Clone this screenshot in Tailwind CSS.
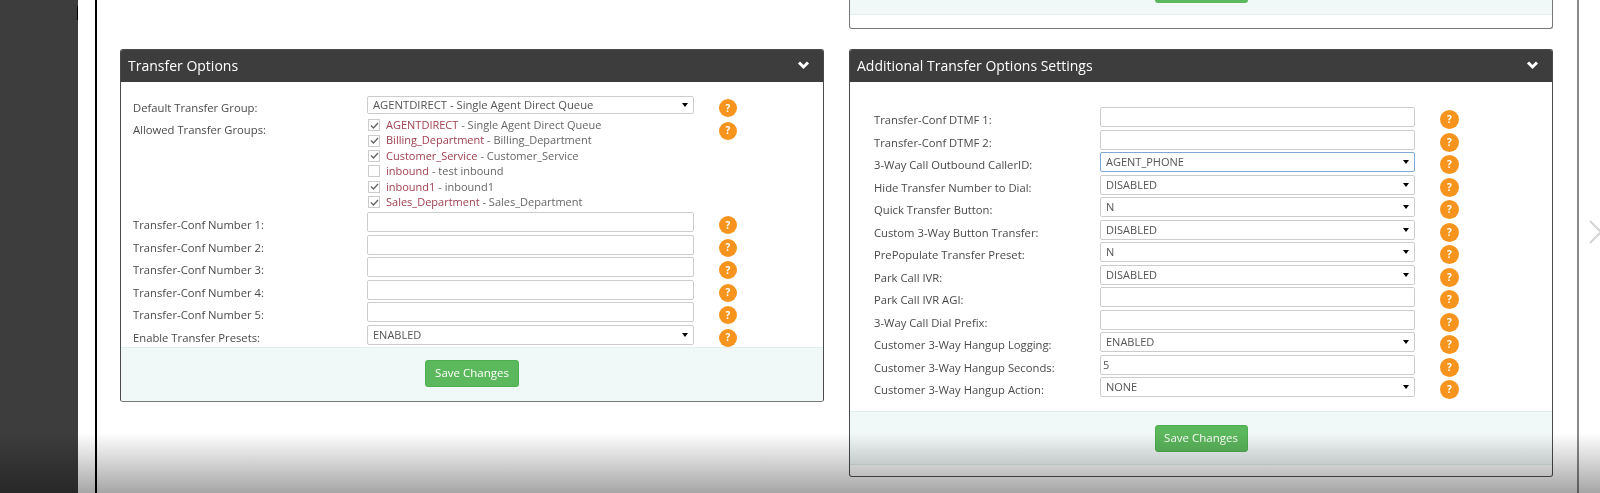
<!DOCTYPE html>
<html lang="en">
<head>
<meta charset="utf-8">
<title>Transfer Options</title>
<script src="https://cdn.jsdelivr.net/npm/@tailwindcss/browser@4"></script>
</head>
<body class="bg-white overflow-hidden">
<div class="relative flex h-[493px] w-[1600px] overflow-hidden bg-white font-['Open_Sans',sans-serif] text-[11.25px] text-[#4a4a4a]">
  <aside class="relative w-[78px] shrink-0 bg-[#3d3d3d]"><span class="absolute right-0 top-[6px] h-[14px] w-[1px] bg-black"></span></aside>
  <div class="w-[17px] shrink-0"></div>
  <main class="flex w-[1484px] shrink-0 gap-[25px] border-x-2 border-l-black border-r-[#8a8a8a] pl-[23px] pr-[24px] blur-[0.35px]">
    <!-- Left column -->
    <div class="w-[704px] shrink-0 pt-[49px]">
      <section class="overflow-hidden rounded-[3px] border border-[#4a4a4a] border-b-[#777]">
        <header class="flex h-[32px] items-center justify-between bg-[#3d3d3d] pb-[2px] pl-[7px] pr-[13px] text-[14px] text-white">
          <h2>Transfer Options</h2>
          <svg class="h-[10px] w-[13px]" viewBox="0 0 13 10" fill="none" stroke="white" stroke-width="3"><path d="M2 2.5l4.5 4.5 4.5-4.5"/></svg>
        </header>
        <div class="pl-[12px] pt-[14px]">
          <div class="flex h-[21.5px] items-start">
            <label class="mt-[3.5px] w-[234px] shrink-0 leading-4">Default Transfer Group:</label>
            <div class="relative h-[18px] w-[327px] shrink-0 rounded-[2px] border border-[#ccc] pl-[5px] leading-4 text-[#555]">AGENTDIRECT - Single Agent Direct Queue<span class="absolute right-[5px] top-[6px] h-0 w-0 border-x-[3px] border-t-[4px] border-x-transparent border-t-black"></span></div>
            <span class="ml-[25px] mt-[3px] flex size-[18px] items-center justify-center rounded-full bg-[#f7941d] text-[10px] font-bold text-white">?</span>
          </div>
          <div class="flex h-[94.5px] items-start">
            <label class="mt-[4.5px] w-[234px] shrink-0 leading-4">Allowed Transfer Groups:</label>
            <ul class="w-[327px] shrink-0 pl-[1px] text-[11px] text-[#666]">
              <li class="flex h-[15.4px] items-center gap-[6px]"><span class="flex size-[12px] items-center justify-center border border-[#ccc]"><svg class="size-[9px]" viewBox="0 0 9 9" fill="none" stroke="#666" stroke-width="1.4"><path d="M1 4.5l2.5 2.5 4.5-5"/></svg></span><span><span class="text-[#a0404f]">AGENTDIRECT</span> - Single Agent Direct Queue</span></li>
              <li class="flex h-[15.4px] items-center gap-[6px]"><span class="flex size-[12px] items-center justify-center border border-[#ccc]"><svg class="size-[9px]" viewBox="0 0 9 9" fill="none" stroke="#666" stroke-width="1.4"><path d="M1 4.5l2.5 2.5 4.5-5"/></svg></span><span><span class="text-[#a0404f]">Billing_Department</span> - Billing_Department</span></li>
              <li class="flex h-[15.4px] items-center gap-[6px]"><span class="flex size-[12px] items-center justify-center border border-[#ccc]"><svg class="size-[9px]" viewBox="0 0 9 9" fill="none" stroke="#666" stroke-width="1.4"><path d="M1 4.5l2.5 2.5 4.5-5"/></svg></span><span><span class="text-[#a0404f]">Customer_Service</span> - Customer_Service</span></li>
              <li class="flex h-[15.4px] items-center gap-[6px]"><span class="flex size-[12px] items-center justify-center border border-[#ccc]"></span><span><span class="text-[#a0404f]">inbound</span> - test inbound</span></li>
              <li class="flex h-[15.4px] items-center gap-[6px]"><span class="flex size-[12px] items-center justify-center border border-[#ccc]"><svg class="size-[9px]" viewBox="0 0 9 9" fill="none" stroke="#666" stroke-width="1.4"><path d="M1 4.5l2.5 2.5 4.5-5"/></svg></span><span><span class="text-[#a0404f]">inbound1</span> - inbound1</span></li>
              <li class="flex h-[15.4px] items-center gap-[6px]"><span class="flex size-[12px] items-center justify-center border border-[#ccc]"><svg class="size-[9px]" viewBox="0 0 9 9" fill="none" stroke="#666" stroke-width="1.4"><path d="M1 4.5l2.5 2.5 4.5-5"/></svg></span><span><span class="text-[#a0404f]">Sales_Department</span> - Sales_Department</span></li>
            </ul>
            <span class="ml-[25px] mt-[4px] flex size-[18px] items-center justify-center rounded-full bg-[#f7941d] text-[10px] font-bold text-white">?</span>
          </div>
          <div class="flex h-[22.6px] items-start"><label class="mt-[5px] w-[234px] shrink-0 leading-4">Transfer-Conf Number 1:</label><input class="h-[20px] w-[327px] shrink-0 rounded-[2px] border border-[#ccc]" aria-label="Transfer-Conf Number 1"><span class="ml-[25px] mt-[4px] flex size-[18px] items-center justify-center rounded-full bg-[#f7941d] text-[10px] font-bold text-white">?</span></div>
          <div class="flex h-[22.6px] items-start"><label class="mt-[5px] w-[234px] shrink-0 leading-4">Transfer-Conf Number 2:</label><input class="h-[20px] w-[327px] shrink-0 rounded-[2px] border border-[#ccc]" aria-label="Transfer-Conf Number 2"><span class="ml-[25px] mt-[4px] flex size-[18px] items-center justify-center rounded-full bg-[#f7941d] text-[10px] font-bold text-white">?</span></div>
          <div class="flex h-[22.6px] items-start"><label class="mt-[5px] w-[234px] shrink-0 leading-4">Transfer-Conf Number 3:</label><input class="h-[20px] w-[327px] shrink-0 rounded-[2px] border border-[#ccc]" aria-label="Transfer-Conf Number 3"><span class="ml-[25px] mt-[4px] flex size-[18px] items-center justify-center rounded-full bg-[#f7941d] text-[10px] font-bold text-white">?</span></div>
          <div class="flex h-[22.6px] items-start"><label class="mt-[5px] w-[234px] shrink-0 leading-4">Transfer-Conf Number 4:</label><input class="h-[20px] w-[327px] shrink-0 rounded-[2px] border border-[#ccc]" aria-label="Transfer-Conf Number 4"><span class="ml-[25px] mt-[4px] flex size-[18px] items-center justify-center rounded-full bg-[#f7941d] text-[10px] font-bold text-white">?</span></div>
          <div class="flex h-[22.6px] items-start"><label class="mt-[5px] w-[234px] shrink-0 leading-4">Transfer-Conf Number 5:</label><input class="h-[20px] w-[327px] shrink-0 rounded-[2px] border border-[#ccc]" aria-label="Transfer-Conf Number 5"><span class="ml-[25px] mt-[4px] flex size-[18px] items-center justify-center rounded-full bg-[#f7941d] text-[10px] font-bold text-white">?</span></div>
          <div class="flex h-[21.6px] items-start"><label class="mt-[5px] w-[234px] shrink-0 leading-4">Enable Transfer Presets:</label><div class="relative h-[20px] w-[327px] shrink-0 rounded-[2px] border border-[#ccc] pl-[5px] text-[11px] leading-[17px] text-[#555]">ENABLED<span class="absolute right-[5px] top-[7px] h-0 w-0 border-x-[3px] border-t-[4px] border-x-transparent border-t-black"></span></div><span class="ml-[25px] mt-[4px] flex size-[18px] items-center justify-center rounded-full bg-[#f7941d] text-[10px] font-bold text-white">?</span></div>
        </div>
        <footer class="flex h-[54px] items-start justify-center border-t border-[#e3eeee] bg-[#f1f8f8] pt-[12px]">
          <button class="h-[27px] w-[94px] rounded-[3px] border border-[#4cae4c] bg-[#5cb85c] text-[11.5px] text-white">Save Changes</button>
        </footer>
      </section>
    </div>
    <!-- Right column -->
    <div class="flex w-[704px] shrink-0 flex-col gap-[20px]">
      <section class="h-[29px] shrink-0 overflow-hidden rounded-b-[3px] border border-t-0 border-[#777] bg-white">
        <div class="flex h-[15px] items-start justify-center border-b border-[#e3eeee] bg-[#f1f8f8]"><span class="block h-[3px] w-[93px] rounded-b-[3px] bg-[#5cb85c]"></span></div>
      </section>
      <section class="overflow-hidden rounded-[3px] border border-[#4a4a4a] border-b-[#555]">
        <header class="flex h-[32px] items-center justify-between bg-[#3d3d3d] pb-[2px] pl-[7px] pr-[13px] text-[14px] text-white">
          <h2>Additional Transfer Options Settings</h2>
          <svg class="h-[10px] w-[13px]" viewBox="0 0 13 10" fill="none" stroke="white" stroke-width="3"><path d="M2 2.5l4.5 4.5 4.5-4.5"/></svg>
        </header>
        <div class="pl-[24px] pt-[25px] pb-[11px]">
          <div class="flex h-[22.5px] items-start"><label class="mt-[5px] w-[226px] shrink-0 leading-4">Transfer-Conf DTMF 1:</label><input class="h-[20px] w-[315px] shrink-0 rounded-[2px] border border-[#ccc]" aria-label="Transfer-Conf DTMF 1"><span class="ml-[25px] mt-[3px] flex size-[19px] items-center justify-center rounded-full bg-[#f7941d] text-[10px] font-bold text-white">?</span></div>
          <div class="flex h-[22.5px] items-start"><label class="mt-[5px] w-[226px] shrink-0 leading-4">Transfer-Conf DTMF 2:</label><input class="h-[20px] w-[315px] shrink-0 rounded-[2px] border border-[#ccc]" aria-label="Transfer-Conf DTMF 2"><span class="ml-[25px] mt-[3px] flex size-[19px] items-center justify-center rounded-full bg-[#f7941d] text-[10px] font-bold text-white">?</span></div>
          <div class="flex h-[22.5px] items-start"><label class="mt-[5px] w-[226px] shrink-0 leading-4">3-Way Call Outbound CallerID:</label><div class="relative h-[20px] w-[315px] shrink-0 rounded-[2px] border border-[#7ea6d6] pl-[5px] text-[11px] leading-[17px] text-[#555]">AGENT_PHONE<span class="absolute right-[5px] top-[7px] h-0 w-0 border-x-[3px] border-t-[4px] border-x-transparent border-t-black"></span></div><span class="ml-[25px] mt-[3px] flex size-[19px] items-center justify-center rounded-full bg-[#f7941d] text-[10px] font-bold text-white">?</span></div>
          <div class="flex h-[22.5px] items-start"><label class="mt-[5px] w-[226px] shrink-0 leading-4">Hide Transfer Number to Dial:</label><div class="relative h-[20px] w-[315px] shrink-0 rounded-[2px] border border-[#ccc] pl-[5px] text-[11px] leading-[17px] text-[#555]">DISABLED<span class="absolute right-[5px] top-[7px] h-0 w-0 border-x-[3px] border-t-[4px] border-x-transparent border-t-black"></span></div><span class="ml-[25px] mt-[3px] flex size-[19px] items-center justify-center rounded-full bg-[#f7941d] text-[10px] font-bold text-white">?</span></div>
          <div class="flex h-[22.5px] items-start"><label class="mt-[5px] w-[226px] shrink-0 leading-4">Quick Transfer Button:</label><div class="relative h-[20px] w-[315px] shrink-0 rounded-[2px] border border-[#ccc] pl-[5px] text-[11px] leading-[17px] text-[#555]">N<span class="absolute right-[5px] top-[7px] h-0 w-0 border-x-[3px] border-t-[4px] border-x-transparent border-t-black"></span></div><span class="ml-[25px] mt-[3px] flex size-[19px] items-center justify-center rounded-full bg-[#f7941d] text-[10px] font-bold text-white">?</span></div>
          <div class="flex h-[22.5px] items-start"><label class="mt-[5px] w-[226px] shrink-0 leading-4">Custom 3-Way Button Transfer:</label><div class="relative h-[20px] w-[315px] shrink-0 rounded-[2px] border border-[#ccc] pl-[5px] text-[11px] leading-[17px] text-[#555]">DISABLED<span class="absolute right-[5px] top-[7px] h-0 w-0 border-x-[3px] border-t-[4px] border-x-transparent border-t-black"></span></div><span class="ml-[25px] mt-[3px] flex size-[19px] items-center justify-center rounded-full bg-[#f7941d] text-[10px] font-bold text-white">?</span></div>
          <div class="flex h-[22.5px] items-start"><label class="mt-[5px] w-[226px] shrink-0 leading-4">PrePopulate Transfer Preset:</label><div class="relative h-[20px] w-[315px] shrink-0 rounded-[2px] border border-[#ccc] pl-[5px] text-[11px] leading-[17px] text-[#555]">N<span class="absolute right-[5px] top-[7px] h-0 w-0 border-x-[3px] border-t-[4px] border-x-transparent border-t-black"></span></div><span class="ml-[25px] mt-[3px] flex size-[19px] items-center justify-center rounded-full bg-[#f7941d] text-[10px] font-bold text-white">?</span></div>
          <div class="flex h-[22.5px] items-start"><label class="mt-[5px] w-[226px] shrink-0 leading-4">Park Call IVR:</label><div class="relative h-[20px] w-[315px] shrink-0 rounded-[2px] border border-[#ccc] pl-[5px] text-[11px] leading-[17px] text-[#555]">DISABLED<span class="absolute right-[5px] top-[7px] h-0 w-0 border-x-[3px] border-t-[4px] border-x-transparent border-t-black"></span></div><span class="ml-[25px] mt-[3px] flex size-[19px] items-center justify-center rounded-full bg-[#f7941d] text-[10px] font-bold text-white">?</span></div>
          <div class="flex h-[22.5px] items-start"><label class="mt-[5px] w-[226px] shrink-0 leading-4">Park Call IVR AGI:</label><input class="h-[20px] w-[315px] shrink-0 rounded-[2px] border border-[#ccc]" aria-label="Park Call IVR AGI"><span class="ml-[25px] mt-[3px] flex size-[19px] items-center justify-center rounded-full bg-[#f7941d] text-[10px] font-bold text-white">?</span></div>
          <div class="flex h-[22.5px] items-start"><label class="mt-[5px] w-[226px] shrink-0 leading-4">3-Way Call Dial Prefix:</label><input class="h-[20px] w-[315px] shrink-0 rounded-[2px] border border-[#ccc]" aria-label="3-Way Call Dial Prefix"><span class="ml-[25px] mt-[3px] flex size-[19px] items-center justify-center rounded-full bg-[#f7941d] text-[10px] font-bold text-white">?</span></div>
          <div class="flex h-[22.5px] items-start"><label class="mt-[5px] w-[226px] shrink-0 leading-4">Customer 3-Way Hangup Logging:</label><div class="relative h-[20px] w-[315px] shrink-0 rounded-[2px] border border-[#ccc] pl-[5px] text-[11px] leading-[17px] text-[#555]">ENABLED<span class="absolute right-[5px] top-[7px] h-0 w-0 border-x-[3px] border-t-[4px] border-x-transparent border-t-black"></span></div><span class="ml-[25px] mt-[3px] flex size-[19px] items-center justify-center rounded-full bg-[#f7941d] text-[10px] font-bold text-white">?</span></div>
          <div class="flex h-[22.5px] items-start"><label class="mt-[5px] w-[226px] shrink-0 leading-4">Customer 3-Way Hangup Seconds:</label><div class="h-[20px] w-[315px] shrink-0 rounded-[2px] border border-[#ccc] pl-[2px] text-[11px] leading-[17px] text-[#555]">5</div><span class="ml-[25px] mt-[3px] flex size-[19px] items-center justify-center rounded-full bg-[#f7941d] text-[10px] font-bold text-white">?</span></div>
          <div class="flex h-[22.5px] items-start"><label class="mt-[5px] w-[226px] shrink-0 leading-4">Customer 3-Way Hangup Action:</label><div class="relative h-[20px] w-[315px] shrink-0 rounded-[2px] border border-[#ccc] pl-[5px] text-[11px] leading-[17px] text-[#555]">NONE<span class="absolute right-[5px] top-[7px] h-0 w-0 border-x-[3px] border-t-[4px] border-x-transparent border-t-black"></span></div><span class="ml-[25px] mt-[3px] flex size-[19px] items-center justify-center rounded-full bg-[#f7941d] text-[10px] font-bold text-white">?</span></div>
        </div>
        <footer class="flex h-[54px] items-start justify-center border-y border-[#e3eeee] bg-[#f1f8f8] pt-[13px]">
          <button class="h-[27px] w-[93px] rounded-[3px] border border-[#4cae4c] bg-[#5cb85c] text-[11.5px] text-white">Save Changes</button>
        </footer>
        <div class="h-[11px]"></div>
      </section>
    </div>
  </main>
  <div class="flex flex-1 items-start justify-end pt-[220px]">
    <svg class="h-[24px] w-[11px]" viewBox="0 0 11 24" fill="none" stroke="#d4d4d4" stroke-width="2"><path d="M1 1l11 11-11 11"/></svg>
  </div>
  <!-- video control shade lying over the whole frame -->
  <div class="pointer-events-none absolute inset-x-0 bottom-0 h-[60px] bg-gradient-to-b from-transparent to-black/35"></div>
</div>
</body>
</html>
